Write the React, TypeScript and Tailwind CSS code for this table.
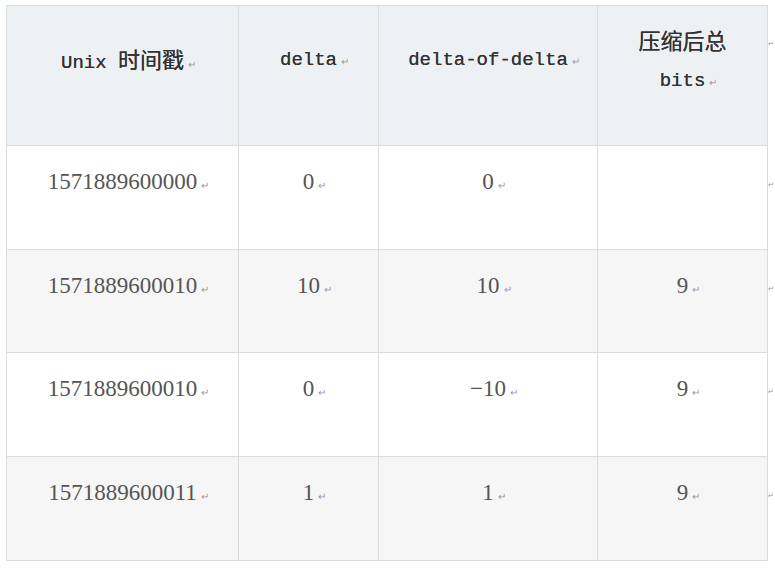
import React from "react";

type Row = { ts: string; delta: string; dod: string; bits: string; bg: string; h: string };

const rows: Row[] = [
  { ts: "1571889600000", delta: "0", dod: "0", bits: "", bg: "bg-white", h: "h-[103px]" },
  { ts: "1571889600010", delta: "10", dod: "10", bits: "9", bg: "bg-[#f6f6f6]", h: "h-[102px]" },
  { ts: "1571889600010", delta: "0", dod: "\u221210", bits: "9", bg: "bg-white", h: "h-[103px]" },
  { ts: "1571889600011", delta: "1", dod: "1", bits: "9", bg: "bg-[#f6f6f6]", h: "h-[103px]" },
];

// paragraph mark, takes no width so the text itself stays centred
function Mark() {
  return (
    <span className="inline-block w-[12px] mr-[-12px] pl-[4px] text-[10px] leading-none text-[#9a9a9a] font-['Liberation_Sans',sans-serif] font-normal [text-shadow:none]">
      ↵
    </span>
  );
}

function Cjk({ children }: { children: React.ReactNode }) {
  return <span className="text-[22px] font-normal font-['Noto_Sans_CJK_SC',sans-serif]">{children}</span>;
}

function HeadCell({ children }: { children: React.ReactNode }) {
  return (
    <div className="h-[139px] bg-[#eef1f3] flex items-center justify-center pb-[30px] text-center text-[19px] font-normal text-[#333] leading-[37px] font-['Liberation_Mono','Noto_Sans_CJK_SC',monospace] [text-shadow:0_0_0.4px_#333]">
      <div>{children}</div>
    </div>
  );
}

function BodyCell({ text, bg, h }: { text: string; bg: string; h: string }) {
  return (
    <div className={`${bg} ${h} flex items-center justify-center pb-[30px] text-[23px] text-[#555] font-['Liberation_Serif',serif]`}>
      {text !== "" && (
        <span>
          {text}
          <Mark />
        </span>
      )}
    </div>
  );
}

export default function App() {
  return (
    <div className="w-[775px] h-[571px] bg-white overflow-hidden pt-[5px] pl-[6px] flex">
      {/* table */}
      <div className="self-start grid grid-cols-[231px_139px_218px_169px] gap-px bg-[#dcdcdc] border border-[#dcdcdc]">
        <HeadCell>
          Unix <Cjk>时间戳</Cjk>
          <Mark />
        </HeadCell>
        <HeadCell>
          delta
          <Mark />
        </HeadCell>
        <HeadCell>
          delta-of-delta
          <Mark />
        </HeadCell>
        <HeadCell>
          <div>
            <Cjk>压缩后总</Cjk>
          </div>
          <div>
            bits
            <Mark />
          </div>
        </HeadCell>

        {rows.map((r, i) => (
          <React.Fragment key={i}>
            <BodyCell text={r.ts} bg={r.bg} h={r.h} />
            <BodyCell text={r.delta} bg={r.bg} h={r.h} />
            <BodyCell text={r.dod} bg={r.bg} h={r.h} />
            <BodyCell text={r.bits} bg={r.bg} h={r.h} />
          </React.Fragment>
        ))}
      </div>

      {/* end-of-row marks */}
      <div className="flex flex-col pt-[1px] text-[7px] leading-none text-[#9a9a9a] font-['Liberation_Sans',sans-serif]">
        <div className="h-[140px] pt-[34px]">↵</div>
        <div className="h-[104px] pt-[35px]">↵</div>
        <div className="h-[103px] pt-[35px]">↵</div>
        <div className="h-[104px] pt-[35px]">↵</div>
        <div className="h-[104px] pt-[35px]">↵</div>
      </div>
    </div>
  );
}
